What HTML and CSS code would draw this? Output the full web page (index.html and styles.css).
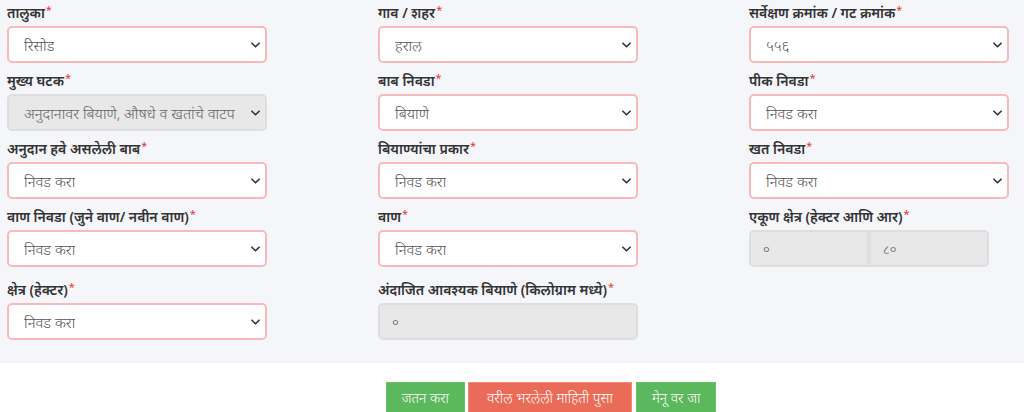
FILE: index.html
```html
<!DOCTYPE html>
<html lang="mr">
<head>
<meta charset="utf-8">
<title>बियाणे अर्ज</title>
<link rel="stylesheet" href="styles.css">
</head>
<body>
<div class="panel">
  <div class="grid">
    <div class="field">
      <label class="lbl">तालुका<sup>*</sup></label>
      <div class="sel"><span>रिसोड</span><svg class="chev" viewBox="0 0 10 6"><path d="M1 1l4 4 4-4"/></svg></div>
    </div>
    <div class="field">
      <label class="lbl">गाव / शहर<sup>*</sup></label>
      <div class="sel"><span>हराल</span><svg class="chev" viewBox="0 0 10 6"><path d="M1 1l4 4 4-4"/></svg></div>
    </div>
    <div class="field">
      <label class="lbl">सर्वेक्षण क्रमांक / गट क्रमांक<sup>*</sup></label>
      <div class="sel"><span>५५६</span><svg class="chev" viewBox="0 0 10 6"><path d="M1 1l4 4 4-4"/></svg></div>
    </div>

    <div class="field">
      <label class="lbl">मुख्य घटक<sup>*</sup></label>
      <div class="sel dis"><span>अनुदानावर बियाणे, औषधे व खतांचे वाटप</span><svg class="chev" viewBox="0 0 10 6"><path d="M1 1l4 4 4-4"/></svg></div>
    </div>
    <div class="field">
      <label class="lbl">बाब निवडा<sup>*</sup></label>
      <div class="sel"><span>बियाणे</span><svg class="chev" viewBox="0 0 10 6"><path d="M1 1l4 4 4-4"/></svg></div>
    </div>
    <div class="field">
      <label class="lbl">पीक निवडा<sup>*</sup></label>
      <div class="sel"><span>निवड करा</span><svg class="chev" viewBox="0 0 10 6"><path d="M1 1l4 4 4-4"/></svg></div>
    </div>

    <div class="field">
      <label class="lbl">अनुदान हवे असलेली बाब<sup>*</sup></label>
      <div class="sel"><span>निवड करा</span><svg class="chev" viewBox="0 0 10 6"><path d="M1 1l4 4 4-4"/></svg></div>
    </div>
    <div class="field">
      <label class="lbl">बियाण्यांचा प्रकार<sup>*</sup></label>
      <div class="sel"><span>निवड करा</span><svg class="chev" viewBox="0 0 10 6"><path d="M1 1l4 4 4-4"/></svg></div>
    </div>
    <div class="field">
      <label class="lbl">खत निवडा<sup>*</sup></label>
      <div class="sel"><span>निवड करा</span><svg class="chev" viewBox="0 0 10 6"><path d="M1 1l4 4 4-4"/></svg></div>
    </div>

    <div class="field">
      <label class="lbl">वाण निवडा (जुने वाण/ नवीन वाण)<sup>*</sup></label>
      <div class="sel"><span>निवड करा</span><svg class="chev" viewBox="0 0 10 6"><path d="M1 1l4 4 4-4"/></svg></div>
    </div>
    <div class="field">
      <label class="lbl">वाण<sup>*</sup></label>
      <div class="sel"><span>निवड करा</span><svg class="chev" viewBox="0 0 10 6"><path d="M1 1l4 4 4-4"/></svg></div>
    </div>
    <div class="field">
      <label class="lbl">एकूण क्षेत्र (हेक्टर आणि आर)<sup>*</sup></label>
      <div class="igroup">
        <div class="inp half">०</div>
        <div class="inp half">८०</div>
      </div>
    </div>

    <div class="field last">
      <label class="lbl">क्षेत्र (हेक्टर)<sup>*</sup></label>
      <div class="sel"><span>निवड करा</span><svg class="chev" viewBox="0 0 10 6"><path d="M1 1l4 4 4-4"/></svg></div>
    </div>
    <div class="field last">
      <label class="lbl">अंदाजित आवश्यक बियाणे (किलोग्राम मध्ये)<sup>*</sup></label>
      <div class="inp">०</div>
    </div>
  </div>
</div>
<div class="actions">
  <button class="btn green">जतन करा</button>
  <button class="btn red">वरील भरलेली माहिती पुसा</button>
  <button class="btn green">मेनू वर जा</button>
</div>
</body>
</html>
```
FILE: styles.css
```css
* { box-sizing: border-box; }
html, body { margin: 0; padding: 0; background: #fff; }
body {
  font-family: "Noto Sans", "Liberation Sans", sans-serif;
  color: #333;
  font-size: 14px;
}
.panel {
  background: #f5f6fa;
  height: 363px;
  padding: 3px 0 0 7px;
  border-bottom: 1px solid #eceef3;
}
.grid {
  display: grid;
  grid-template-columns: 260px 260px 260px;
  column-gap: 111px;
  row-gap: 8px;
}
.field { display: flex; flex-direction: column; }
.field.last { margin-top: 5px; }
.lbl {
  font-weight: 600;
  font-size: 14px;
  line-height: 19px;
  height: 19px;
  margin-bottom: 4px;
  color: #333;
  white-space: nowrap;
}
.lbl sup {
  color: #e53935;
  font-size: 11px;
  font-weight: 400;
  vertical-align: top;
  position: relative;
  top: -3px;
  margin-left: 1px;
}
.sel {
  height: 37px;
  background: #fff;
  border: 2px solid #f6baba;
  border-radius: 5px;
  display: flex;
  align-items: center;
  justify-content: space-between;
  padding: 0 5px 0 15px;
  color: #555;
  font-size: 15px;
  font-weight: 300;
}
.sel span { white-space: nowrap; overflow: hidden; }
.sel.dis {
  background: #e8e8e8;
  border-color: #dedede;
  color: #666;
}
.chev {
  width: 9px;
  height: 6px;
  flex: none;
  margin-left: 14px;
  fill: none;
  stroke: #333;
  stroke-width: 1.8;
  stroke-linecap: round;
  stroke-linejoin: round;
}
.inp {
  height: 37px;
  background: #e8e8e8;
  border: 2px solid #dedede;
  border-radius: 5px;
  display: flex;
  align-items: center;
  padding-left: 12px;
  color: #555;
  font-size: 13px;
  font-weight: 300;
}
.igroup { display: flex; width: 240px; }
.inp.half { width: 120px; }
.inp.half:first-child { border-radius: 5px 0 0 5px; }
.inp.half:last-child { border-radius: 0 5px 5px 0; }
.actions {
  display: flex;
  justify-content: center;
  padding: 19px 0 0 78px;
  gap: 3px;
}
.btn {
  font-family: "Noto Sans", "Liberation Sans", sans-serif;
  font-size: 14px;
  font-weight: 300;
  color: #fff;
  border: 1px solid transparent;
  padding: 4px 15px;
  line-height: 21px;
  height: 31px;
  border-radius: 0;
  cursor: pointer;
}
.btn.green { background: #5cb85c; border-color: #6cc06c; }
.btn.red { background: #ea6b58; border-color: #f08a7a; margin-right: 1px; padding: 4px 18px; }
```
